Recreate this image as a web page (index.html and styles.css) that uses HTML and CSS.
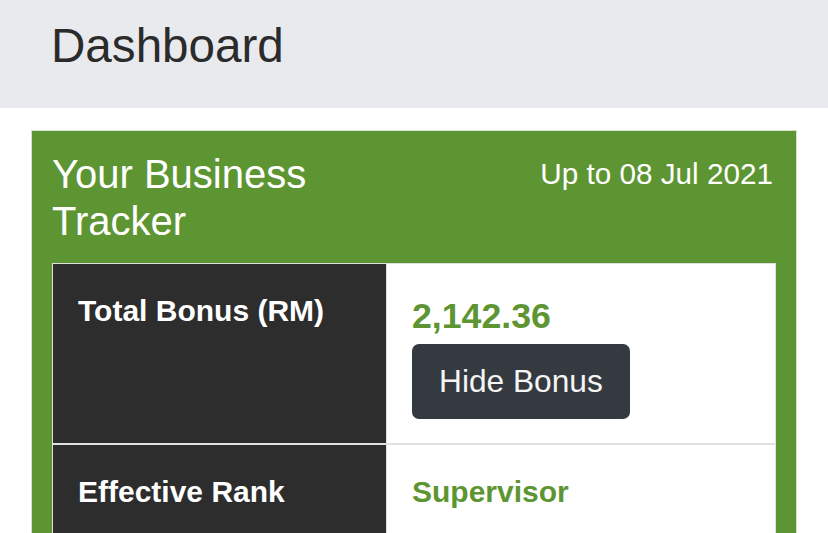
FILE: index.html
```html
<!DOCTYPE html>
<html lang="en">
<head>
<meta charset="utf-8">
<title>Dashboard</title>
<link rel="stylesheet" href="styles.css">
</head>
<body>
<header class="topbar">
  <h1 class="page-title">Dashboard</h1>
</header>
<main class="content">
  <section class="card">
    <div class="card-head">
      <h2 class="card-title">Your Business Tracker</h2>
      <div class="card-date">Up to 08 Jul 2021</div>
    </div>
    <div class="tracker">
      <div class="label">Total Bonus (RM)</div>
      <div class="value">
        <div class="amount">2,142.36</div>
        <button class="btn-dark" type="button">Hide Bonus</button>
      </div>
      <div class="label">Effective Rank</div>
      <div class="value value-text">
        <div class="rank">Supervisor</div>
      </div>
    </div>
  </section>
</main>
</body>
</html>
```

FILE: styles.css
```css
html {
  overflow: hidden;
}

body {
  margin: 0;
  background: #ffffff;
  font-family: "Liberation Sans", Arial, sans-serif;
  color: #222;
}

.topbar {
  background: #e9eaed;
  height: 108px;
  box-sizing: border-box;
  padding: 17px 0 0 51px;
}

.page-title {
  margin: 0;
  font-size: 47.6px;
  font-weight: 400;
  line-height: 1.2;
  color: #2b2b2b;
}

.content {
  padding: 22px 31px 0;
}

.card {
  background: #5e9533;
  border: 1px solid #d6e2cc;
  padding: 20px;
}

.card-head {
  display: grid;
  grid-template-columns: 1fr 1fr;
  margin-bottom: 18px;
  color: #ffffff;
}

.card-title {
  margin: 0;
  font-size: 40px;
  font-weight: 400;
  line-height: 47px;
}

.card-date {
  text-align: right;
  font-size: 29.7px;
  line-height: 44px;
  margin-top: 1px;
  padding-right: 3px;
}

.tracker {
  display: grid;
  grid-template-columns: 333px 1fr;
  column-gap: 1px;
  row-gap: 2px;
  background: #dee0e2;
  border: 1px solid #dee0e2;
}

.label {
  background: #2d2d2d;
  color: #ffffff;
  font-weight: 700;
  font-size: 30px;
  line-height: 1.5;
  padding: 24px 25px 24px;
}

.value {
  background: #ffffff;
  padding: 26px 25px 24px;
}

.value-text {
  padding-top: 24px;
}

.amount {
  color: #5e9533;
  font-weight: 700;
  font-size: 35.7px;
  line-height: 1.5;
}

.rank {
  color: #5e9533;
  font-weight: 700;
  font-size: 30px;
  line-height: 1.5;
}

.btn-dark {
  display: inline-block;
  background: #343a40;
  color: #f5f5f5;
  border: none;
  border-radius: 7px;
  font-family: "Liberation Sans", Arial, sans-serif;
  font-size: 31.7px;
  line-height: 47px;
  padding: 14px 27px;
  margin: 0;
}
```
